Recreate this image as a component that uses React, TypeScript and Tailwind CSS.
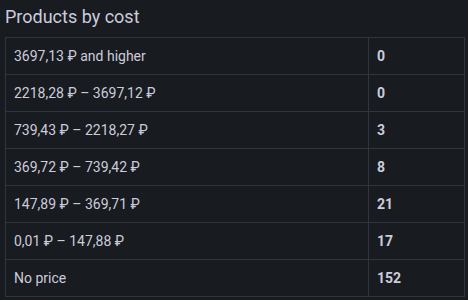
const rows: { label: string; count: number }[] = [
  { label: '3697,13 ₽ and higher', count: 0 },
  { label: '2218,28 ₽ – 3697,12 ₽', count: 0 },
  { label: '739,43 ₽ – 2218,27 ₽', count: 3 },
  { label: '369,72 ₽ – 739,42 ₽', count: 8 },
  { label: '147,89 ₽ – 369,71 ₽', count: 21 },
  { label: '0,01 ₽ – 147,88 ₽', count: 17 },
  { label: 'No price', count: 152 },
];

export default function App() {
  return (
    <div
      className="h-[300px] w-[468px] overflow-hidden bg-[#181b1f] text-[#ccccdc]"
      style={{ fontFamily: 'Roboto, "Noto Sans", sans-serif' }}
    >
      <h2 className="px-[5px] pt-[4px] text-[18px] leading-[25px] font-normal">Products by cost</h2>
      <table className="mt-[8px] ml-[5px] w-[460px] border-collapse text-[14px]">
        <tbody>
          {rows.map((r) => (
            <tr key={r.label} className="h-[37px]">
              <td className="w-[363px] border border-[#2f3642] pl-[8px] pr-2 align-middle">{r.label}</td>
              <td className="border border-[#2f3642] pl-[8px] font-bold align-middle">{r.count}</td>
            </tr>
          ))}
        </tbody>
      </table>
    </div>
  );
}
